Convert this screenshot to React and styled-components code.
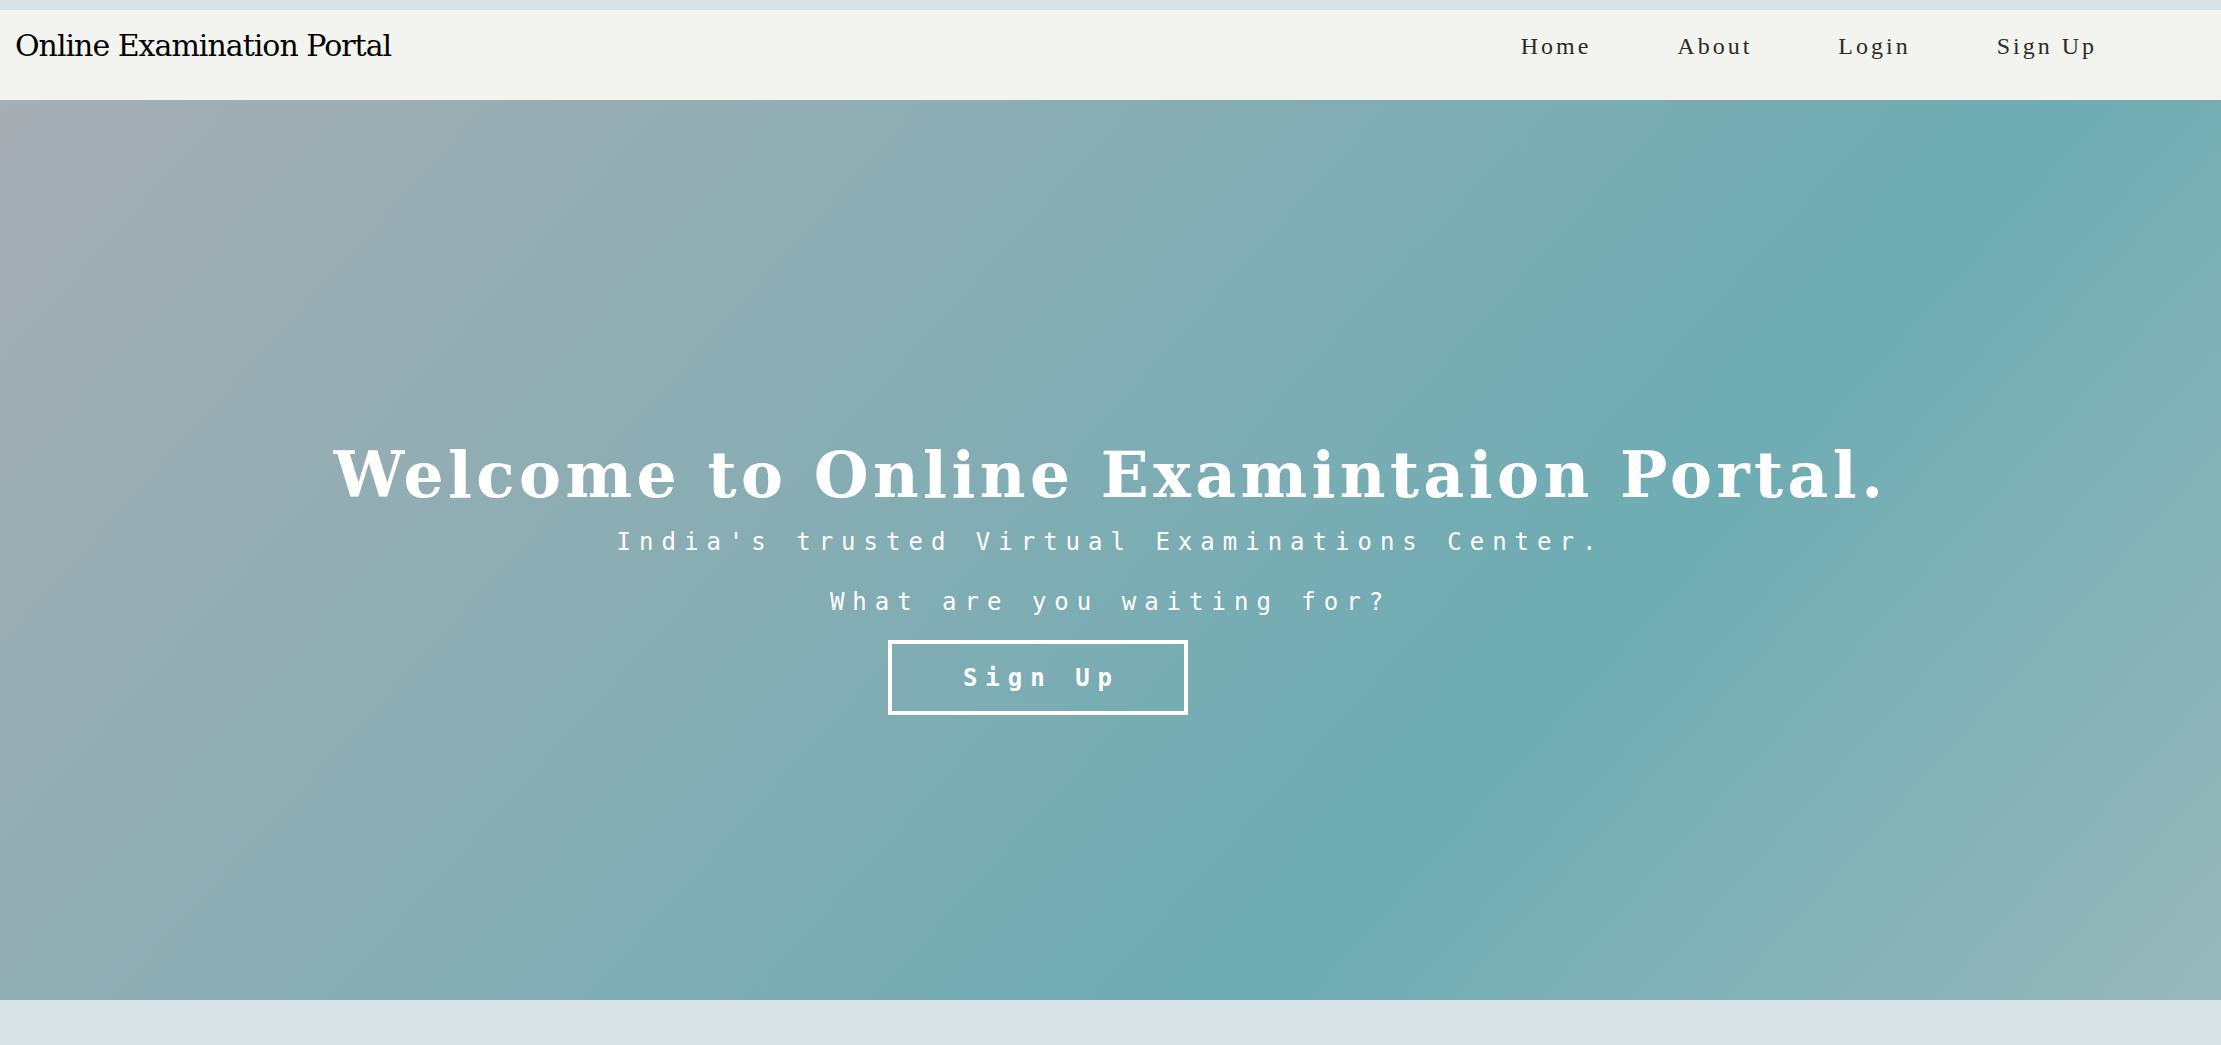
import React from 'react'
import styled, { createGlobalStyle } from 'styled-components'

const GlobalStyle = createGlobalStyle`
  html, body {
    margin: 0;
    padding: 0;
  }
  body {
    background: #d8e3e8;
    padding-top: 10px;
  }
  ::-webkit-scrollbar {
    width: 6px;
    background: #f1f1f1;
  }
  ::-webkit-scrollbar-thumb {
    background: #c1c1c1;
    border-left: 2px solid #f1f1f1;
  }
`

function App() {
  return (
    <>
      <GlobalStyle />
      <Navbar>
        <Brand>Online Examination Portal</Brand>
        <NavLinks>
          <NavLink href="#">Home</NavLink>
          <NavLink href="#">About</NavLink>
          <NavLink href="#">Login</NavLink>
          <NavLink href="#">Sign Up</NavLink>
        </NavLinks>
      </Navbar>
      {/* Hero */}
      <Hero>
        <Headline>Welcome to Online Examintaion Portal.</Headline>
        <Tagline>India's trusted Virtual Examinations Center.</Tagline>
        <Tagline $gap="32px">What are you waiting for?</Tagline>
        <SignUpButton>Sign Up</SignUpButton>
      </Hero>
      <PageRest />
    </>
  )
}
export default App

const Navbar = styled.nav`
  display: flex;
  justify-content: space-between;
  align-items: flex-start;
  height: 90px;
  background: #f3f4ef;
  padding: 0 124px 0 15px;
  box-sizing: border-box;
`

const Brand = styled.div`
  margin-top: 18px;
  font-family: "DejaVu Serif", serif;
  font-size: 30px;
  letter-spacing: -1px;
  color: #000;
`

const NavLinks = styled.div`
  display: flex;
  gap: 86px;
  margin-top: 23px;
`

const NavLink = styled.a`
  font-family: "Liberation Serif", serif;
  font-size: 24px;
  letter-spacing: 3px;
  color: #2b2b2b;
  text-decoration: none;
`

const Hero = styled.section`
  height: 900px;
  box-sizing: border-box;
  padding-top: 338px;
  display: flex;
  flex-direction: column;
  align-items: center;
  background: linear-gradient(132deg, #a7aeb4 0%, #6eacb3 68%, #98b8bb 100%);
  color: #fff;
`

const Headline = styled.h1`
  margin: 0;
  font-family: "DejaVu Serif", serif;
  font-weight: 700;
  font-size: 63px;
  line-height: 74px;
  letter-spacing: 4.4px;
  text-align: center;
`

const Tagline = styled.p`
  margin: ${p => p.$gap || '16px'} 0 0;
  font-family: "DejaVu Sans Mono", monospace;
  font-size: 24px;
  letter-spacing: 8px;
  text-align: center;
`

const SignUpButton = styled.button`
  margin: 24px 146px 0 0;
  width: 300px;
  height: 75px;
  border: 4px solid #fff;
  background: transparent;
  color: #fff;
  font-family: "DejaVu Sans Mono", monospace;
  font-weight: 700;
  font-size: 24px;
  letter-spacing: 8px;
  padding: 0 0 0 8px;
  cursor: pointer;
`

const PageRest = styled.div`
  height: 3800px;
`
